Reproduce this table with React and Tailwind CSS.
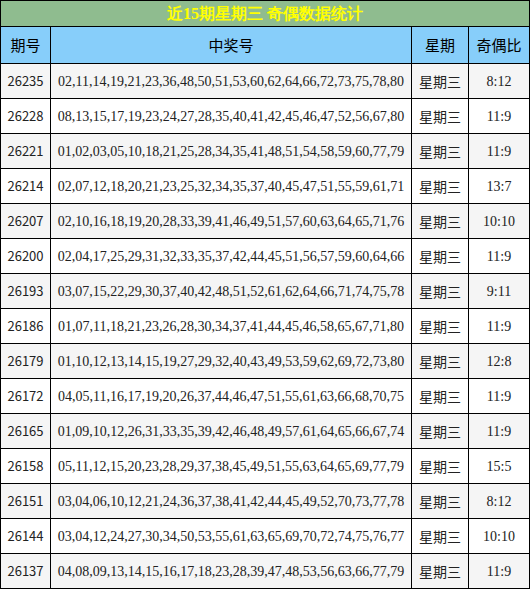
import React from "react";

const rows = [
  ["26235", "02,11,14,19,21,23,36,48,50,51,53,60,62,64,66,72,73,75,78,80", "8:12"],
  ["26228", "08,13,15,17,19,23,24,27,28,35,40,41,42,45,46,47,52,56,67,80", "11:9"],
  ["26221", "01,02,03,05,10,18,21,25,28,34,35,41,48,51,54,58,59,60,77,79", "11:9"],
  ["26214", "02,07,12,18,20,21,23,25,32,34,35,37,40,45,47,51,55,59,61,71", "13:7"],
  ["26207", "02,10,16,18,19,20,28,33,39,41,46,49,51,57,60,63,64,65,71,76", "10:10"],
  ["26200", "02,04,17,25,29,31,32,33,35,37,42,44,45,51,56,57,59,60,64,66", "11:9"],
  ["26193", "03,07,15,22,29,30,37,40,42,48,51,52,61,62,64,66,71,74,75,78", "9:11"],
  ["26186", "01,07,11,18,21,23,26,28,30,34,37,41,44,45,46,58,65,67,71,80", "11:9"],
  ["26179", "01,10,12,13,14,15,19,27,29,32,40,43,49,53,59,62,69,72,73,80", "12:8"],
  ["26172", "04,05,11,16,17,19,20,26,37,44,46,47,51,55,61,63,66,68,70,75", "11:9"],
  ["26165", "01,09,10,12,26,31,33,35,39,42,46,48,49,57,61,64,65,66,67,74", "11:9"],
  ["26158", "05,11,12,15,20,23,28,29,37,38,45,49,51,55,63,64,65,69,77,79", "15:5"],
  ["26151", "03,04,06,10,12,21,24,36,37,38,41,42,44,45,49,52,70,73,77,78", "8:12"],
  ["26144", "03,04,12,24,27,30,34,50,53,55,61,63,65,69,70,72,74,75,76,77", "10:10"],
  ["26137", "04,08,09,13,14,15,16,17,18,23,28,39,47,48,53,56,63,66,77,79", "11:9"],
];

const cjk = { fontFamily: '"Noto Sans CJK SC", "Noto Sans", sans-serif' };
const serif = { fontFamily: '"Liberation Serif", "Noto Sans CJK SC", serif' };

export default function App() {
  return (
    <div className="bg-white w-[530px] h-[589px]">
      <table className="table-fixed border-collapse w-[529px] text-[#222]">
        <colgroup>
          <col className="w-[50px]" />
          <col className="w-[361px]" />
          <col className="w-[57px]" />
          <col className="w-[61px]" />
        </colgroup>
        <tbody>
          <tr className="h-[26px]">
            <td
              colSpan={4}
              className="border border-black bg-[#8fbc8f] text-center text-[16px] font-bold text-[#ffff00] leading-[24px] p-0"
              style={{ fontFamily: '"Liberation Serif", "Noto Sans CJK SC", serif' }}
            >
              <span className="font-[Liberation_Serif]">近15期星期三 奇偶数据统计</span>
            </td>
          </tr>
          <tr className="h-[37px] bg-[#87cefa] text-[15px] text-black" style={cjk}>
            <td className="border border-black text-center p-0">期号</td>
            <td className="border border-black text-center p-0">中奖号</td>
            <td className="border border-black text-center p-0">星期</td>
            <td className="border border-black text-center p-0">奇偶比</td>
          </tr>
          {rows.map((r, i) => (
            <tr key={r[0]} className={i % 2 === 0 ? "h-[35px] bg-[#f5f5f5]" : "h-[35px] bg-white"}>
              <td className="border border-black text-center p-0 text-[13px]" style={cjk}>{r[0]}</td>
              <td className="border border-black text-center p-0 text-[14px]" style={serif}>{r[1]}</td>
              <td className="border border-black text-center p-0 text-[14px]" style={cjk}>星期三</td>
              <td className="border border-black text-center p-0 text-[14px]" style={serif}>{r[2]}</td>
            </tr>
          ))}
        </tbody>
      </table>
    </div>
  );
}
